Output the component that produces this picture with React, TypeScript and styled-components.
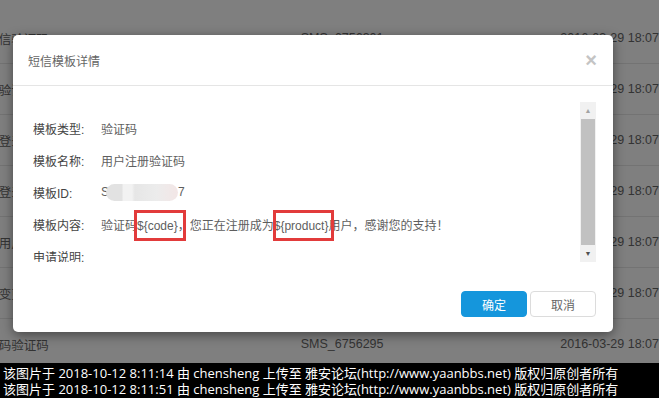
import styled, { createGlobalStyle } from "styled-components";

const GlobalStyle = createGlobalStyle`
  html, body {
    margin: 0;
    padding: 0;
    width: 659px;
    height: 398px;
    overflow: hidden;
    background: #7f7f7f;
  }
  * {
    box-sizing: border-box;
  }
`

const rows = [
  { name: "发送验证码短信验证码", code: "SMS_6756301", time: "2016-03-29 18:07" },
  { name: "身份验证测试", code: "SMS_6756300", time: "2016-03-29 18:07" },
  { name: "登录确认", code: "SMS_6756299", time: "2016-03-29 18:07" },
  { name: "登录异常", code: "SMS_6756298", time: "2016-03-29 18:07" },
  { name: "用户注册", code: "SMS_6756297", time: "2016-03-29 18:07" },
  { name: "变更确认", code: "SMS_6756296", time: "2016-03-29 18:07" },
  { name: "找回密码验证码", code: "SMS_6756295", time: "2016-03-29 18:07" },
]

const fields = [
  { label: "模板类型:", value: "验证码" },
  { label: "模板名称:", value: "用户注册验证码" },
]

const marks = [
  "该图片于 2018-10-12 8:11:14 由 chensheng 上传至 雅安论坛(http://www.yaanbbs.net) 版权归原创者所有",
  "该图片于 2018-10-12 8:11:51 由 chensheng 上传至 雅安论坛(http://www.yaanbbs.net) 版权归原创者所有",
]

export default function App() {
  return (
    <>
      <GlobalStyle />
      <Page>
        <Table>
          {rows.map((r) => (
            <Row key={r.code}>
              <NameCell><span>{r.name}</span></NameCell>
              <CodeCell>{r.code}</CodeCell>
              <TimeCell>{r.time}</TimeCell>
            </Row>
          ))}

          <Dialog>
            <Header>
              <Title>短信模板详情</Title>
              <Close>×</Close>
            </Header>
            <Body>
              <Scroll>
                <Fields>
                  {fields.map((f) => (
                    <Field key={f.label}>
                      <Label>{f.label}</Label>
                      <Value>{f.value}</Value>
                    </Field>
                  ))}
                  <Field>
                    <Label>模板ID:</Label>
                    <Value>
                      S<Blur />7
                    </Value>
                  </Field>
                  <Field>
                    <Label>模板内容:</Label>
                    <Value>
                      验证码<Mark $l={-3} $r={-8}>{"${code}"}</Mark>，您正在注册成为<Mark $l={-1} $r={-6}>{"${product}"}</Mark>用户，感谢您的支持！
                    </Value>
                  </Field>
                  <Field>
                    <Label>申请说明:</Label>
                    <Value></Value>
                  </Field>
                </Fields>
                <ScrollBar>
                  <Arrow $up>▲</Arrow>
                  <Thumb />
                  <Arrow>▼</Arrow>
                </ScrollBar>
              </Scroll>
            </Body>
            <Footer>
              <Button $primary>确定</Button>
              <Button>取消</Button>
            </Footer>
          </Dialog>
        </Table>
        <Watermark>
          {marks.map((m) => (
            <div key={m}>{m}</div>
          ))}
        </Watermark>
      </Page>
    </>
  )
}

const Page = styled.div`
  display: flex;
  flex-direction: column;
  width: 659px;
  height: 398px;
  font-family: "Liberation Sans", "Noto Sans CJK SC", sans-serif;
`
const Table = styled.div`
  position: relative;
  flex: 1;
  overflow: hidden;
  padding-top: 13px;
`
const Row = styled.div`
  display: flex;
  align-items: center;
  height: 51px;
  border-bottom: 1px solid #737373;
  font-size: 12.5px;
  color: #333;
`
const NameCell = styled.div`
  display: flex;
  justify-content: flex-end;
  width: 50px;
  overflow: hidden;
  white-space: nowrap;
  span {
    flex-shrink: 0;
  }
`
const CodeCell = styled.div`
  margin-left: 252px;
  width: 266px;
  white-space: nowrap;
`
const TimeCell = styled.div`
  white-space: nowrap;
`
const Dialog = styled.div`
  position: absolute;
  left: 13px;
  top: 35px;
  width: 600px;
  height: 297px;
  display: flex;
  flex-direction: column;
  background: #fff;
  border-radius: 5px;
  box-shadow: 0 3px 12px rgba(0, 0, 0, 0.45);
`
const Header = styled.div`
  display: flex;
  justify-content: space-between;
  align-items: center;
  height: 51px;
  padding: 0 16px 0 15px;
  border-bottom: 1px solid #e5e5e5;
`
const Title = styled.div`
  font-size: 12px;
  color: #666;
  font-family: "Noto Sans CJK SC", sans-serif;
`
const Close = styled.div`
  font-size: 20px;
  font-weight: bold;
  line-height: 1;
  color: #c4c4c4;
  font-family: "Liberation Sans", sans-serif;
`
const Body = styled.div`
  padding: 16px 17px 0 20px;
`
const Scroll = styled.div`
  display: flex;
  height: 160px;
  overflow: hidden;
`
const Fields = styled.div`
  flex: 1;
  padding-top: 10px;
`
const Field = styled.div`
  display: flex;
  align-items: center;
  height: 32px;
  font-size: 12px;
`
const Label = styled.div`
  width: 68px;
  flex-shrink: 0;
  color: #444;
`
const Value = styled.div`
  white-space: nowrap;
  color: #5e5e5e;
`
const Blur = styled.span`
  display: inline-block;
  vertical-align: middle;
  width: 72px;
  height: 17px;
  margin: 0 0 0 -3px;
  border-radius: 9px;
  background: linear-gradient(90deg, #e2e2e2 0%, #e2e2e2 22%, #f2f2f2 24%, #f2f2f2 36%, #e6e6e6 40%, #ececec 70%, #f3e6e6 100%);
  filter: blur(0.6px);
`
const Mark = styled.span<{ $l: number; $r: number }>`
  position: relative;
  &::after {
    content: "";
    position: absolute;
    left: ${(p) => p.$l}px;
    right: ${(p) => p.$r}px;
    top: -9px;
    bottom: -8px;
    border: 3px solid #e23b3b;
  }
`
const ScrollBar = styled.div`
  display: flex;
  flex-direction: column;
  width: 16px;
  background: #f1f1f1;
`
const Arrow = styled.div<{ $up?: boolean }>`
  height: 17px;
  display: flex;
  align-items: center;
  justify-content: center;
  font-size: 7px;
  color: ${(p) => (p.$up ? "#a3a3a3" : "#505050")};
`
const Thumb = styled.div`
  flex: 1;
  margin: 0 1px;
  background: #c1c1c1;
`
const Footer = styled.div`
  display: flex;
  justify-content: flex-end;
  gap: 3px;
  margin-top: auto;
  padding: 0 17px 15px 0;
`
const Button = styled.div<{ $primary?: boolean }>`
  display: flex;
  align-items: center;
  justify-content: center;
  width: 66px;
  height: 26px;
  border-radius: 4px;
  font-size: 12px;
  font-family: "Noto Sans CJK SC", sans-serif;
  background: ${(p) => (p.$primary ? "#1596dc" : "#fff")};
  color: ${(p) => (p.$primary ? "#fff" : "#666")};
  border: 1px solid ${(p) => (p.$primary ? "#1596dc" : "#dcdcdc")};
`
const Watermark = styled.div`
  height: 35px;
  padding: 2px 0 0 3px;
  background: #000;
  color: #fff;
  font-size: 13px;
  line-height: 16px;
  font-family: "Open Sans", "Noto Sans CJK SC", sans-serif;
  white-space: nowrap;
  overflow: hidden;
`
